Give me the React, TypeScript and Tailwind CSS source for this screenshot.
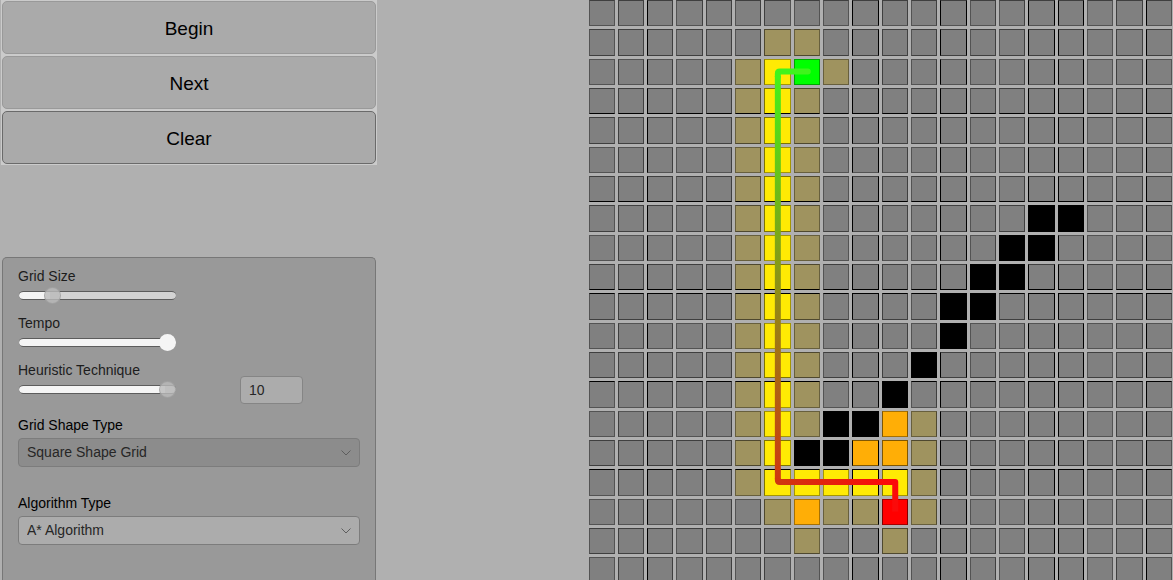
import React, { useState } from "react";
import clsx from "clsx";

const MAP = [
  "....................",
  "......vv............",
  ".....vpsv...........",
  ".....vpv............",
  ".....vpv............",
  ".....vpv............",
  ".....vpv............",
  ".....vpv.......ww...",
  ".....vpv......ww....",
  ".....vpv.....ww.....",
  ".....vpv....ww......",
  ".....vpv....w.......",
  ".....vpv...w........",
  ".....vpv..w.........",
  ".....vpvwwov........",
  ".....vpwwoov........",
  ".....vpppppv........",
  "......vovvev........",
  ".......v..v.........",
  "....................",
];

const FILL: Record<string, string> = {
  ".": "bg-[#808080]",
  v: "bg-[#9f935f]",
  p: "bg-[#ffea04]",
  o: "bg-[#ffae06]",
  w: "bg-black",
  s: "bg-[#00ff00]",
  e: "bg-[#ff0000]",
};

// Edge weights per row and column: l = light, m = medium, d = dark
const TOP_EDGES = "mmlmmlmmlmdlmdlmdlml";
const BOTTOM_EDGES = "lmldmldmldmlmllmllmm";
const LEFT_EDGES = "lmdlmlmlldmldllddlmd";
const RIGHT_EDGES = "lmmmmmllldmmdmmddlml";

const TOP: Record<string, string> = { l: "border-t-black/35", m: "border-t-black/50", d: "border-t-black" };
const BOTTOM: Record<string, string> = { l: "border-b-black/35", m: "border-b-black/50", d: "border-b-black" };
const LEFT: Record<string, string> = { l: "border-l-black/35", m: "border-l-black/50", d: "border-l-black" };
const RIGHT: Record<string, string> = { l: "border-r-black/35", m: "border-r-black/50", d: "border-r-black" };

function PathLine() {
  return (
    <svg viewBox="0 0 584 584" className="absolute inset-0 h-full w-full" fill="none" strokeWidth="6" aria-hidden="true">
      <defs>
        <linearGradient id="down" gradientUnits="userSpaceOnUse" x1="0" y1="72" x2="0" y2="482">
          <stop offset="0" stopColor="#44f21c" />
          <stop offset="1" stopColor="#cf3710" />
        </linearGradient>
        <linearGradient id="across" gradientUnits="userSpaceOnUse" x1="189" y1="0" x2="307" y2="0">
          <stop offset="0" stopColor="#cf3710" />
          <stop offset="0.9" stopColor="#fb0a0a" />
        </linearGradient>
      </defs>
      <path d="M189 76V479" stroke="url(#down)" />
      <path d="M189 76.500V73.500Q189 71.500 191 71.500H219" stroke="#40f41c" strokeLinecap="round" />
      <path d="M189 478.500V480.500Q189 482.500 191 482.500H306.500V512" stroke="url(#across)" strokeLinejoin="round" />
    </svg>
  );
}

function Board() {
  return (
    <div className="relative grid grid-cols-20 gap-[3px]" role="img" aria-label="Search grid">
      {MAP.flatMap((row, r) =>
        row.split("").map((cell, c) => (
          <div
            key={`${r}-${c}`}
            className={clsx(
              "aspect-square border",
              FILL[cell],
              TOP[TOP_EDGES[r]],
              BOTTOM[BOTTOM_EDGES[r]],
              LEFT[LEFT_EDGES[c]],
              RIGHT[RIGHT_EDGES[c]],
            )}
          />
        )),
      )}
      <PathLine />
    </div>
  );
}

const SLIDER =
  "ml-px block h-[18px] w-[157px] appearance-none bg-transparent outline-none [&::-webkit-slider-runnable-track]:h-[9px] [&::-webkit-slider-runnable-track]:rounded-full [&::-webkit-slider-runnable-track]:border-y [&::-webkit-slider-runnable-track]:border-[#5c5c5c] [&::-webkit-slider-thumb]:-mt-[5px] [&::-webkit-slider-thumb]:h-[17px] [&::-webkit-slider-thumb]:w-[17px] [&::-webkit-slider-thumb]:appearance-none [&::-webkit-slider-thumb]:rounded-full";
const TRACK_PART =
  "[&::-webkit-slider-runnable-track]:bg-[linear-gradient(to_right,#f4f4f4_20%,#d3d3d3_20%)]";
const TRACK_FULL =
  "[&::-webkit-slider-runnable-track]:bg-[linear-gradient(to_right,#f4f4f4_93%,#d3d3d3_93%)]";
const THUMB_ON = "[&::-webkit-slider-thumb]:bg-[#f5f5f5]";
const THUMB_OFF =
  "[&::-webkit-slider-thumb]:border [&::-webkit-slider-thumb]:border-[#9a9a9a]/70 [&::-webkit-slider-thumb]:bg-[#bababa]/80";

type SliderProps = { id: string; label: string; initial: number; track: string; disabled?: boolean };

function Slider({ id, label, initial, track, disabled }: SliderProps) {
  const [value, setValue] = useState(initial);
  return (
    <div className="flex flex-col">
      <label htmlFor={id} className="leading-5 text-[#1c1c1c]">{label}</label>
      <input
        id={id}
        type="range"
        min={0}
        max={100}
        value={value}
        disabled={disabled}
        onChange={(e) => setValue(Number(e.target.value))}
        className={clsx(SLIDER, track, disabled ? THUMB_OFF : THUMB_ON)}
      />
    </div>
  );
}

type DropdownProps = { id: string; label: string; options: string[]; disabled?: boolean };

function Dropdown({ id, label, options, disabled }: DropdownProps) {
  return (
    <div className="flex flex-col gap-[3px]">
      <label htmlFor={id} className="leading-5 text-black">{label}</label>
      <div className="relative">
        <select
          id={id}
          disabled={disabled}
          className={clsx(
            "block h-[29px] w-full appearance-none rounded-[4px] border border-[#7c7c7c] px-[8px] text-[#262626] disabled:opacity-100",
            disabled ? "bg-[#8c8c8c]" : "bg-[#acacac]",
          )}
        >
          {options.map((o) => (
            <option key={o}>{o}</option>
          ))}
        </select>
        <svg
          viewBox="0 0 10 6"
          className="pointer-events-none absolute top-[12px] right-[9px] h-[6px] w-[10px]"
          fill="none"
          stroke="#5e5e5e"
          aria-hidden="true"
        >
          <path d="M0.500 0.500L5 5L9.500 0.500" />
        </svg>
      </div>
    </div>
  );
}

function ActionButton({ children, strong }: { children: React.ReactNode; strong?: boolean }) {
  return (
    <button
      type="button"
      className={clsx(
        "h-[53px] rounded-[5px] border bg-[#aaaaaa] pt-[3px] text-[19px] text-black",
        strong ? "border-[#6a6a6a]" : "border-[#999999]",
      )}
    >
      {children}
    </button>
  );
}

export default function App() {
  return (
    <div className="flex h-screen overflow-hidden bg-[#b0b0b0] font-['Liberation_Sans',Arial,sans-serif] text-[14px]">
      <aside className="flex w-[377px] shrink-0 flex-col pl-px">
        <div className="flex flex-col gap-[2px] bg-[#cbcbcb] p-px">
          <ActionButton>Begin</ActionButton>
          <ActionButton>Next</ActionButton>
          <ActionButton strong>Clear</ActionButton>
        </div>
        <section className="mt-[92px] mr-px ml-px flex grow flex-col rounded-t-[5px] border border-b-0 border-[#777777] bg-[#999999] px-[15px] pt-[8px]">
          <div className="flex flex-col gap-[9px]">
            <Slider id="grid-size" label="Grid Size" initial={18} track={TRACK_PART} disabled />
            <Slider id="tempo" label="Tempo" initial={100} track={TRACK_FULL} />
            <div className="flex items-start gap-16">
              <Slider id="heuristic" label="Heuristic Technique" initial={100} track={TRACK_FULL} disabled />
              <input
                type="text"
                aria-label="Heuristic value"
                defaultValue="10"
                className="mt-4 -mb-[6px] h-[28px] w-[63px] rounded-[4px] border border-[#858585] bg-[#acacac] px-[8px] text-[#262626]"
              />
            </div>
          </div>
          <div className="mt-[17px] flex flex-col gap-[26px]">
            <Dropdown id="shape" label="Grid Shape Type" options={["Square Shape Grid"]} disabled />
            <Dropdown id="algorithm" label="Algorithm Type" options={["A* Algorithm"]} />
          </div>
        </section>
      </aside>
      <main className="ml-auto w-1/2 pr-px pl-[2px]">
        <Board />
      </main>
    </div>
  );
}
